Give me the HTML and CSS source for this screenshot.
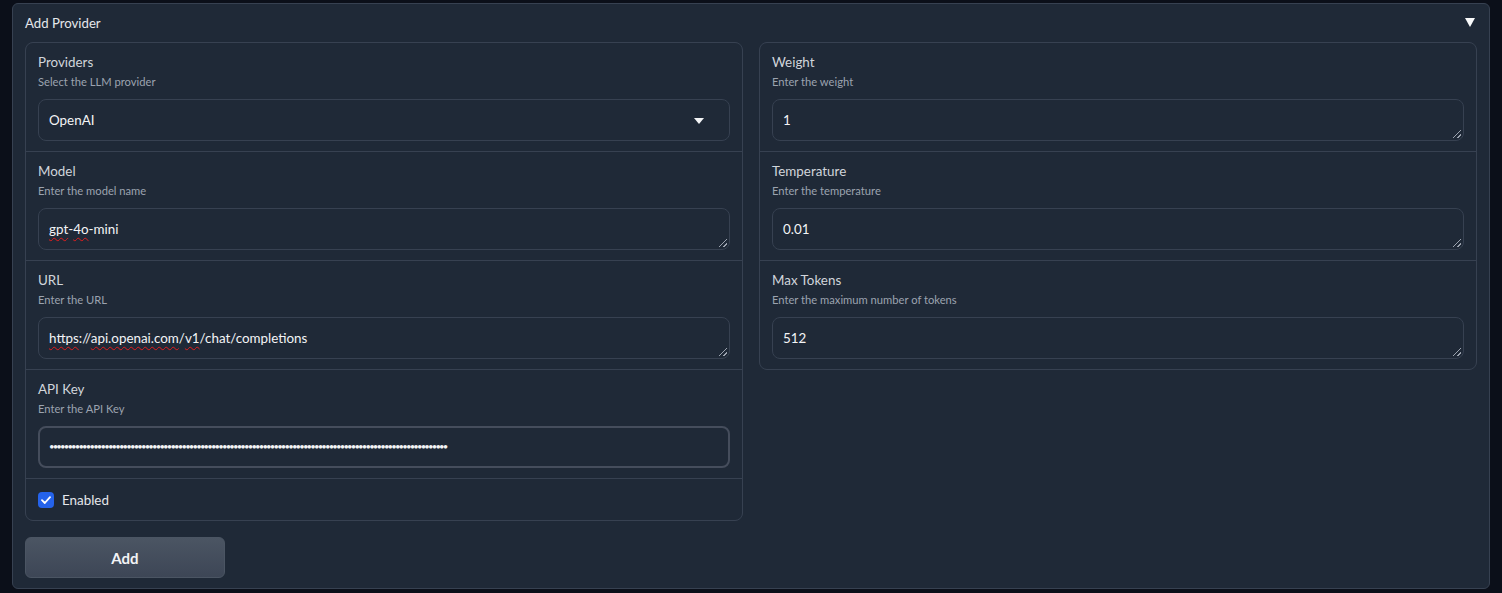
FILE: index.html
```html
<!DOCTYPE html>
<html lang="en">
<head>
<meta charset="utf-8">
<title>Add Provider</title>
<link rel="stylesheet" href="styles.css">
</head>
<body>
<div class="page">
  <section class="accordion">
    <div class="acc-header">
      <span class="acc-title">Add Provider</span>
      <svg class="acc-icon" width="10" height="9" viewBox="0 0 10 9"><path d="M0 0 L10 0 L5 9 Z" fill="#f9fafb"/></svg>
    </div>
    <div class="acc-body">
      <div class="row">
        <div class="col">
          <div class="block">
            <div class="label">Providers</div>
            <div class="info">Select the LLM provider</div>
            <div class="field select">
              <span class="value">OpenAI</span>
              <svg class="caret" width="10" height="6" viewBox="0 0 10 6"><path d="M0 0 L10 0 L5 6 Z" fill="#f3f4f6"/></svg>
            </div>
          </div>
          <div class="block">
            <div class="label">Model</div>
            <div class="info">Enter the model name</div>
            <div class="field area"><span class="value"><span class="sp">gpt</span>-<span class="sp">4o</span>-mini</span><span class="grip"></span></div>
          </div>
          <div class="block">
            <div class="label">URL</div>
            <div class="info">Enter the URL</div>
            <div class="field area"><span class="value"><span class="sp">https</span>://<span class="sp">api.openai.com</span>/<span class="sp">v1</span>/chat/completions</span><span class="grip"></span></div>
          </div>
          <div class="block">
            <div class="label">API Key</div>
            <div class="info">Enter the API Key</div>
            <div class="field focused"><span class="value dots">••••••••••••••••••••••••••••••••••••••••••••••••••••••••••••••••••••••••••••••••••••••••••••••••••••••••••••</span></div>
          </div>
          <div class="block check-block">
            <span class="checkbox">
              <svg width="10" height="8" viewBox="0 0 10 8"><path d="M1 4.2 L3.8 7 L9 1.2" fill="none" stroke="#fff" stroke-width="1.8" stroke-linecap="round" stroke-linejoin="round"/></svg>
            </span>
            <span class="check-label">Enabled</span>
          </div>
        </div>
        <div class="col">
          <div class="block">
            <div class="label">Weight</div>
            <div class="info">Enter the weight</div>
            <div class="field area"><span class="value">1</span><span class="grip"></span></div>
          </div>
          <div class="block">
            <div class="label">Temperature</div>
            <div class="info">Enter the temperature</div>
            <div class="field area"><span class="value">0.01</span><span class="grip"></span></div>
          </div>
          <div class="block">
            <div class="label">Max Tokens</div>
            <div class="info">Enter the maximum number of tokens</div>
            <div class="field area"><span class="value">512</span><span class="grip"></span></div>
          </div>
        </div>
      </div>
      <button class="btn" type="button">Add</button>
    </div>
  </section>
</div>
</body>
</html>
```

FILE: styles.css
```css
* { box-sizing: border-box; }
html, body { margin: 0; padding: 0; }
body {
  background: #0b0f19;
  font-family: "Lato", "Liberation Sans", sans-serif;
  color: #e5e7eb;
}
.page { padding: 3px 12px 0 12px; }
.accordion {
  background: #1f2937;
  border: 1px solid #374151;
  border-radius: 6px;
  padding: 0 12px 10px 12px;
}
.acc-header {
  display: flex;
  justify-content: space-between;
  align-items: center;
  height: 38px;
  padding-bottom: 1px;
}
.acc-title { font-size: 13.2px; color: #e5e7eb; }
.acc-icon { display: block; margin-right: 2px; }
.row {
  display: flex;
  gap: 16px;
  align-items: flex-start;
}
.col {
  flex: 1;
  display: flex;
  flex-direction: column;
  gap: 1px;
  background: #374151;
  border: 1px solid #374151;
  border-radius: 8px;
  overflow: hidden;
}
.block {
  background: #1f2937;
  padding: 9px 12px 10px 12px;
}
.label { font-size: 13.4px; line-height: 20px; color: #d1d5db; margin-bottom: 2px; }
.info { font-size: 11.2px; line-height: 16px; color: #9ca3af; margin-bottom: 9px; }
.field {
  position: relative;
  height: 42px;
  border: 1px solid #374151;
  border-radius: 8px;
  background: #1f2937;
  display: flex;
  align-items: center;
  padding: 0 10px 1px 10px;
  font-size: 13.4px;
  color: #f3f4f6;
}
.select { justify-content: space-between; padding-right: 25px; }
.caret { display: block; margin-top: 2px; }
.focused {
  border: 2px solid #454d5c;
  padding: 0 9px 1px 9px;
}
.dots { font-size: 9.5px; letter-spacing: -1.83px; color: #f3f4f6; white-space: nowrap; }
.sp {
  text-decoration: underline wavy #e11d1d;
  text-decoration-thickness: 1px;
  text-underline-offset: 3px;
}
.grip {
  position: absolute;
  right: 2px;
  bottom: 2px;
  width: 8px;
  height: 8px;
  background:
    linear-gradient(135deg, transparent 45%, #9ca3af 45%, #9ca3af 55%, transparent 55%, transparent 75%, #9ca3af 75%, #9ca3af 85%, transparent 85%);
}
.check-block {
  display: flex;
  align-items: center;
  gap: 8px;
  height: 41px;
  padding: 0 12px;
}
.checkbox {
  width: 16px;
  height: 16px;
  border-radius: 4px;
  background: #2563eb;
  display: flex;
  align-items: center;
  justify-content: center;
}
.check-label { font-size: 13.4px; color: #e5e7eb; }
.btn {
  display: block;
  margin-top: 16px;
  width: 200px;
  height: 41px;
  border: 1px solid #4b5563;
  border-radius: 6px;
  background: linear-gradient(to bottom, #4b5563, #3d4656);
  color: #f3f4f6;
  font-family: inherit;
  font-size: 15px;
  font-weight: 700;
}
```
